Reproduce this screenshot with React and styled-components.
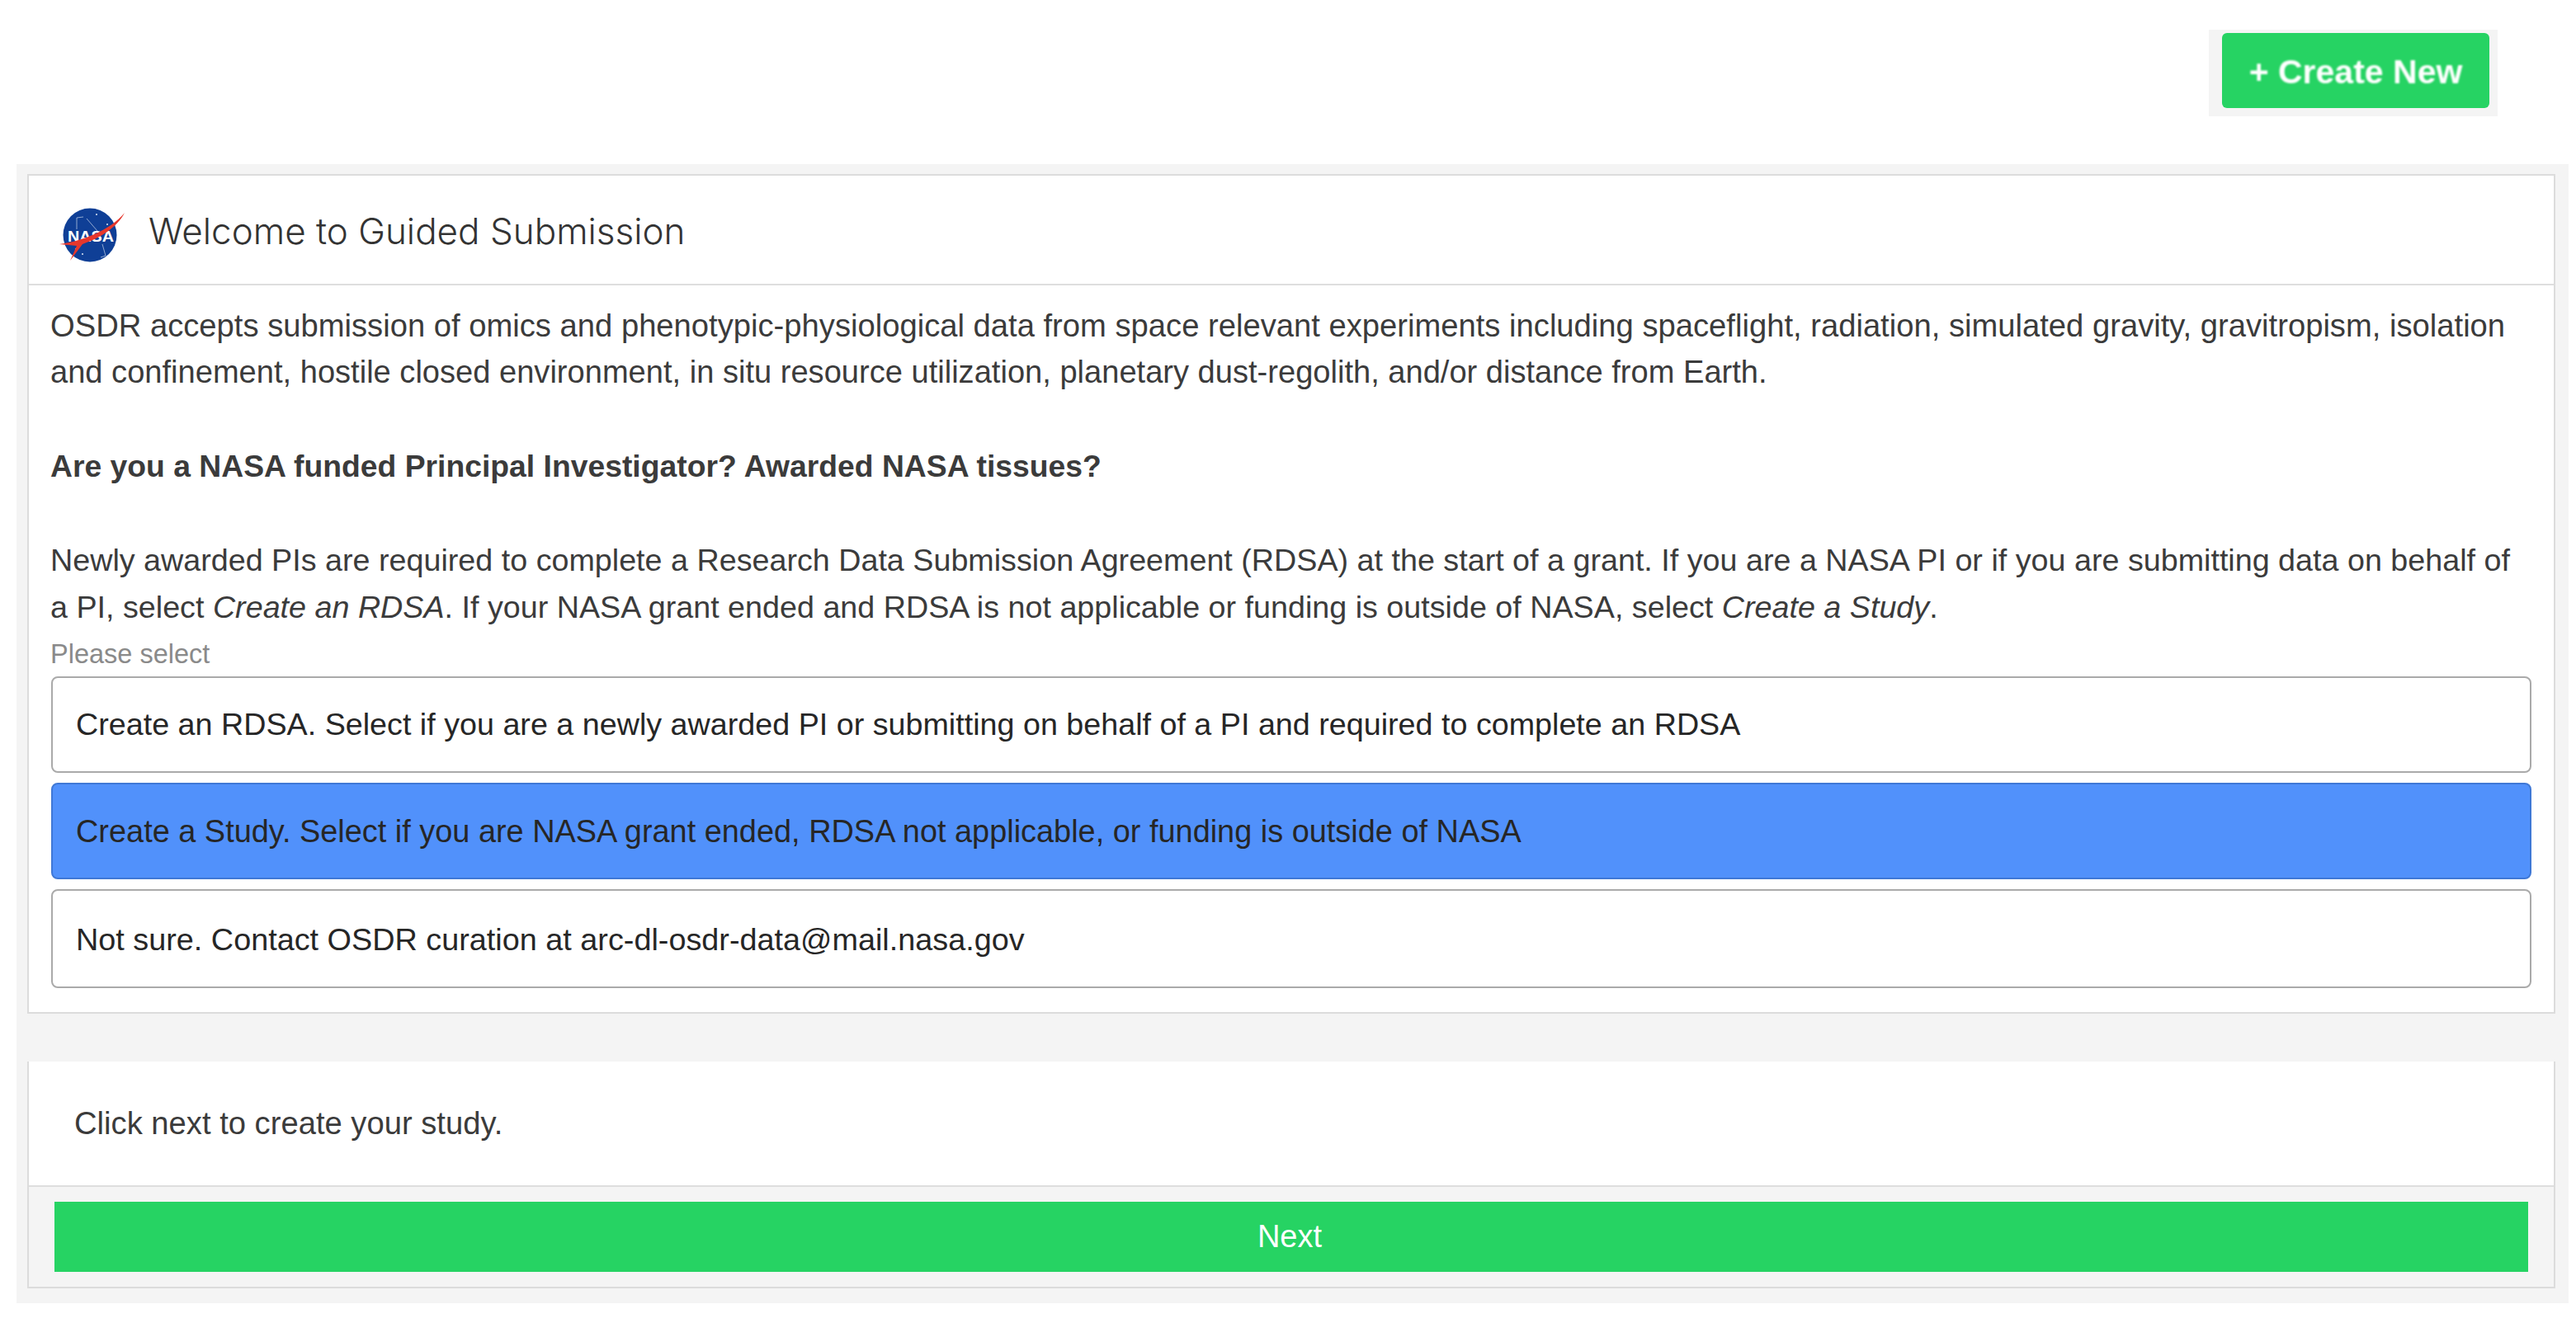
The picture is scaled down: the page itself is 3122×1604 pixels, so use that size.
import React from "react";
import styled, { createGlobalStyle } from "styled-components";

const Global = createGlobalStyle`
  html, body { margin: 0; padding: 0; background: #fff; }
  body { font-family: "Liberation Sans", Arial, sans-serif; color: #333; }
`;
const Page = styled.div`width: 3122px; height: 1604px; display: flex; flex-direction: column;`;
const TopBar = styled.header`
  height: 199px; box-sizing: border-box; padding: 36px 95px 0 0;
  display: flex; justify-content: flex-end; align-items: flex-start;
`;
const CreateWrap = styled.div`background: #f4f4f4; padding: 4px 10px 10px 16px;`;
const CreateButton = styled.button`
  width: 324px; height: 91px; border: 0; border-radius: 6px; background: #26d363; color: #fff;
  font: bold 41px "Liberation Sans", Arial, sans-serif; padding: 4px 0 0;
  display: flex; align-items: center; justify-content: center;
  span { filter: blur(1px); }
`;
const Shell = styled.main`
  margin: 0 9px 0 20px; background: #f4f4f4; padding: 12px 16px 18px 13px;
  display: flex; flex-direction: column; gap: 58px;
`;
const Card = styled.section`
  background: #fff; border: 2px solid #dcdcdc; ${p => p.$open && "border-top: 0;"}
`;
const CardHeader = styled.div`
  height: 133px; box-sizing: border-box; border-bottom: 2px solid #dedede; padding-left: 37px;
  display: flex; align-items: center; gap: 28px;
`;
const LogoMark = styled.svg`margin-top: 12px; flex: none;`;
const Title = styled.h1`
  margin: 2px 0 0; font: 300 44px/1 Inter, "Liberation Sans", sans-serif; color: #333;
`;
const Body = styled.div`padding: 20px 27px 29px 26px;`;
const Para = styled.p`
  margin: 0 0 57px; font-size: ${p => p.$size}px; line-height: 57px; color: #3b3b3b; white-space: nowrap;
  &:last-of-type { margin-bottom: 0; }
`;
const Line = styled.span`display: block; font-size: ${p => p.$size}px;`;
const Label = styled.div`font-size: 32.5px; line-height: 36px; color: #8a8a8a; margin: 10px 0 9px;`;
const Options = styled.div`display: flex; flex-direction: column; gap: 12px; margin-left: 1px;`;
const Option = styled.button`
  height: ${p => p.$h}px; box-sizing: border-box; border: 2px solid ${p => p.$active ? "#3f78d6" : "#aaa"};
  border-radius: 8px; background: ${p => p.$active ? "#5191fb" : "#fff"}; color: #262626;
  font: ${p => p.$size}px "Liberation Sans", Arial, sans-serif; text-align: left;
  padding: ${p => p.$nudge}px 0 0 28px; width: 100%;
`;
const Prompt = styled.div`
  height: 152px; box-sizing: border-box; padding: 0 0 0 55px; display: flex; align-items: center;
  font-size: 38.2px; color: #3b3b3b; border-bottom: 2px solid #dedede;
`;
const Footer = styled.div`background: #f4f4f4; padding: 18px 31px 18px 31px;`;
const NextButton = styled.button`
  display: block; width: 100%; height: 85px; border: 0; background: #26d363; color: #fff;
  font: 38px "Liberation Sans", Arial, sans-serif; padding: 0; text-indent: -4px;
`;

const NasaLogo = () => (
  <LogoMark width="80" height="66" viewBox="0 0 80 66">
    <circle cx="37" cy="33" r="32.5" fill="#0f3f96" />
    <g stroke="#c9d6ea" strokeWidth="1" fill="none" opacity=".7">
      <path d="M21 26V12l8-1M33 13l13 15M52 44l4 14-6 2" />
    </g>
    <g fill="#dfe8f5">
      <circle cx="20" cy="50" r="1" /><circle cx="45" cy="8" r="1" /><circle cx="58" cy="20" r="1" /><circle cx="28" cy="56" r="1" />
    </g>
    <text x="38" y="41" textAnchor="middle" fontFamily="Liberation Sans, sans-serif" fontWeight="700" fontSize="19" fill="#fff" textLength="56" lengthAdjust="spacingAndGlyphs">NASA</text>
    <path d="M0 44C26 41 62 27 79 6 70 24 48 37 28 44L13 64 21 46Z" fill="#e6372c" />
  </LogoMark>
);

export default function App() {
  return (
    <Page>
      <Global />
      <TopBar>
        <CreateWrap><CreateButton><span>+ Create New</span></CreateButton></CreateWrap>
      </TopBar>
      <Shell>
        <Card>
          <CardHeader>
            <NasaLogo />
            <Title>Welcome to Guided Submission</Title>
          </CardHeader>
          <Body>
            <Para $size={38.1}>
              <Line $size={38.2}>OSDR accepts submission of omics and phenotypic-physiological data from space relevant experiments including spaceflight, radiation, simulated gravity, gravitropism, isolation</Line>
              <Line $size={38.1}>and confinement, hostile closed environment, in situ resource utilization, planetary dust-regolith, and/or distance from Earth.</Line>
            </Para>
            <Para $size={37.3}><strong>Are you a NASA funded Principal Investigator? Awarded NASA tissues?</strong></Para>
            <Para $size={37.7}>Newly awarded PIs are required to complete a Research Data Submission Agreement (RDSA) at the start of a grant. If you are a NASA PI or if you are submitting data on behalf of<br />a PI, select <em>Create an RDSA</em>. If your NASA grant ended and RDSA is not applicable or funding is outside of NASA, select <em>Create a Study</em>.</Para>
            <Label>Please select</Label>
            <Options>
              <Option $h={117} $size={37.7} $nudge={0}>Create an RDSA. Select if you are a newly awarded PI or submitting on behalf of a PI and required to complete an RDSA</Option>
              <Option $h={117} $size={37.9} $nudge={2} $active>Create a Study. Select if you are NASA grant ended, RDSA not applicable, or funding is outside of NASA</Option>
              <Option $h={120} $size={37.8} $nudge={2}>Not sure. Contact OSDR curation at arc-dl-osdr-data@mail.nasa.gov</Option>
            </Options>
          </Body>
        </Card>
        <Card $open>
          <Prompt>Click next to create your study.</Prompt>
          <Footer><NextButton>Next</NextButton></Footer>
        </Card>
      </Shell>
    </Page>
  );
}
